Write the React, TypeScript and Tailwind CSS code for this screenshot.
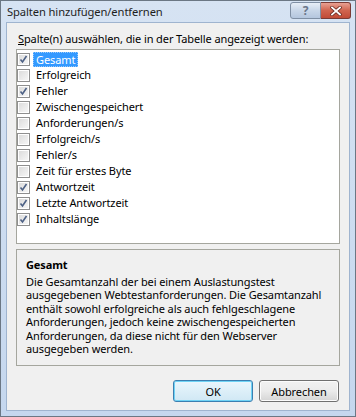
import React from "react";

const items: [string, boolean][] = [
  ["Gesamt", true],
  ["Erfolgreich", false],
  ["Fehler", true],
  ["Zwischengespeichert", false],
  ["Anforderungen/s", false],
  ["Erfolgreich/s", false],
  ["Fehler/s", false],
  ["Zeit für erstes Byte", false],
  ["Antwortzeit", true],
  ["Letzte Antwortzeit", true],
  ["Inhaltslänge", true],
];

const desc = [
  "Die Gesamtanzahl der bei einem Auslastungstest",
  "ausgegebenen Webtestanforderungen. Die Gesamtanzahl",
  "enthält sowohl erfolgreiche als auch fehlgeschlagene",
  "Anforderungen, jedoch keine zwischengespeicherten",
  "Anforderungen, da diese nicht für den Webserver",
  "ausgegeben werden.",
];

function Check({ checked }: { checked: boolean }) {
  return (
    <div className="w-[13px] h-[13px] border border-[#8f8f8f] bg-white p-[1px] shrink-0">
      <div className="w-full h-full bg-gradient-to-br from-[#dcdcdc] to-[#f6f6f6] relative">
        {checked && (
          <svg width="11" height="11" viewBox="0 0 11 11" className="absolute -left-[1px] -top-[1px]">
            <path d="M2.5 5.5 L4.5 8 L8.5 2" fill="none" stroke="#4d6185" strokeWidth="1.6" />
          </svg>
        )}
      </div>
    </div>
  );
}

export default function App() {
  return (
    <div
      className="w-[356px] h-[417px] flex flex-col border border-[#6b7784] bg-gradient-to-b from-[#d6e3f3] to-[#c5d7ee] text-[11px] tracking-[-0.1px] text-black"
      style={{ fontFamily: '"Noto Sans", "Open Sans", sans-serif' }}
    >
      <div className="h-[21px] flex items-start justify-between pl-[6px] pr-[4px]">
        <div className="pt-[3px] text-[11.2px] leading-[16px] text-[#1e1e1e]">Spalten hinzufügen/entfernen</div>
        <div className="flex pt-[1px]">
          <div className="w-[31px] h-[17px] border border-[#7f8fa4] rounded-l-[3px] bg-gradient-to-b from-[#e7eef7] via-[#c8d6e8] to-[#b4c6de] flex items-center justify-center text-[12px] font-bold text-[#6a7689] leading-none">
            ?
          </div>
          <div className="w-[30px] h-[17px] border border-[#7a3b36] border-l-0 rounded-r-[3px] bg-gradient-to-b from-[#e8a093] via-[#d0644f] to-[#c14b37] flex items-center justify-center">
            <svg width="12" height="10" viewBox="0 0 12 10">
              <path d="M2 1.5 L10 8.5 M10 1.5 L2 8.5" stroke="#6a2a22" strokeWidth="3.4" strokeLinecap="square" />
              <path d="M2 1.5 L10 8.5 M10 1.5 L2 8.5" stroke="#ffffff" strokeWidth="1.8" strokeLinecap="square" />
            </svg>
          </div>
        </div>
      </div>
      <div className="flex-1 mx-[5px] mb-[5px] border border-[#9fb4cf] bg-[#f0f0f0] flex flex-col pl-[9px]">
        <div className="pt-[8px] pl-[2px] h-[26px] leading-[16px]">
          <span className="underline">S</span>palte(n) auswählen, die in der Tabelle angezeigt werden:
        </div>
        <div className="w-[324px] h-[195px] border border-[#a5a69e] bg-white pt-[1px] flex flex-col">
          {items.map(([label, checked], i) => (
            <div key={label} className="h-[16px] flex items-center">
              <Check checked={checked} />
              <div
                className={
                  i === 0
                    ? "ml-[3px] h-[15px] px-[2px] bg-[#3399ff] text-white leading-[13px] border border-dotted border-[#9bc9f8]"
                    : "ml-[4px] px-[2px] leading-[16px]"
                }
              >
                {label}
              </div>
            </div>
          ))}
        </div>
        <div className="w-[324px] mt-[5px] h-[117px] border border-[#a5a69e] px-[9px] pt-[7px]">
          <div className="font-bold leading-[16px]">Gesamt</div>
          <div className="leading-[13.4px] pt-[2px] whitespace-nowrap">
            {desc.map((l) => (
              <div key={l}>{l}</div>
            ))}
          </div>
        </div>
        <div className="w-[324px] flex justify-end gap-[6px] pt-[14px] pr-[1px]">
          <button className="w-[80px] h-[22px] rounded-[3px] border border-[#3c7fb1] bg-gradient-to-b from-[#eaf6fd] to-[#d0e8f4] shadow-[inset_0_0_0_1px_#6fd3f5] leading-none">
            OK
          </button>
          <button className="w-[80px] h-[22px] rounded-[3px] border border-[#707070] bg-gradient-to-b from-[#f2f2f2] via-[#ebebeb] to-[#d5d5d5] shadow-[inset_0_0_0_1px_#fcfcfc] leading-none">
            Abbrechen
          </button>
        </div>
      </div>
    </div>
  );
}
